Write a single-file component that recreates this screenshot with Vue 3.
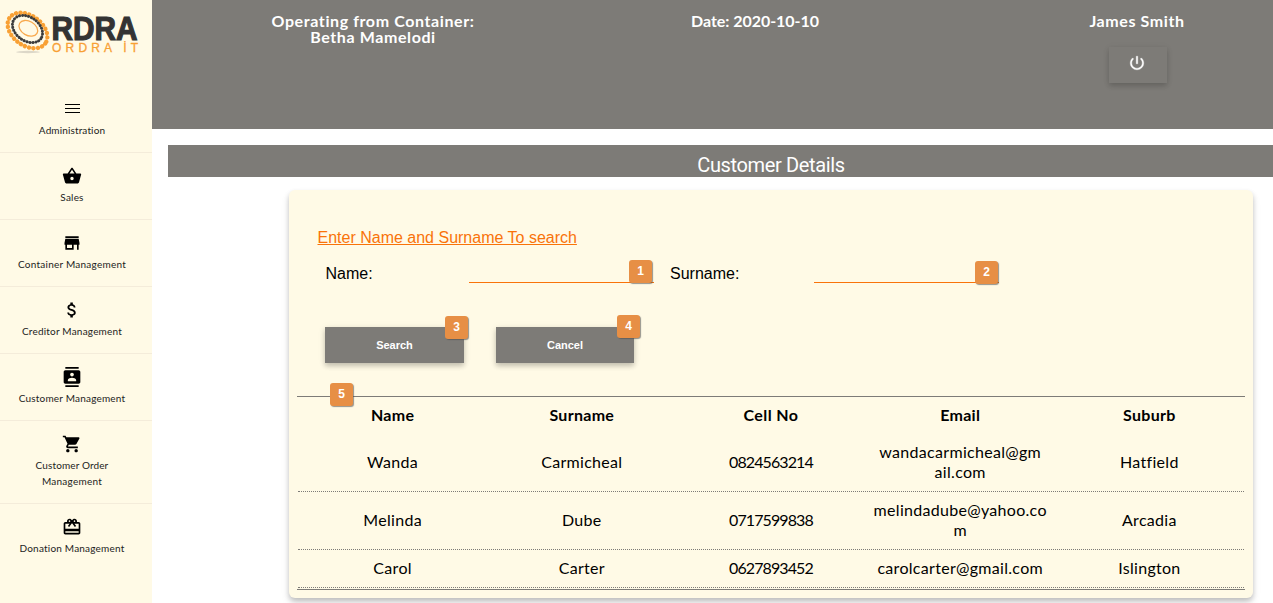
<script setup>
const menu = [
  { icon: 'menu', lines: [['Administration', 0.13]] },
  { icon: 'basket', lines: [['Sales', 0.2]] },
  { icon: 'store', lines: [['Container Management', 0.24]] },
  { icon: 'dollar', lines: [['Creditor Management', 0.2]] },
  { icon: 'contacts', lines: [['Customer Management', 0.2]] },
  { icon: 'cart', lines: [['Customer Order', 0.12], ['Management', 0.25]] },
  { icon: 'gift', lines: [['Donation Management', 0.2]] },
]
const icons = {
  menu: 'M3.6 6h18v1.2h-18zM3.6 10.8h18v1.2h-18zM3.6 15.6h18v1.2h-18z',
  basket: 'M17.21 9l-4.38-6.56c-.19-.28-.51-.42-.83-.42-.32 0-.64.14-.83.43L6.79 9H2c-.55 0-1 .45-1 1 0 .09.01.18.04.27l2.54 9.27c.23.84 1 1.46 1.92 1.46h13c.92 0 1.69-.62 1.93-1.46l2.54-9.27L23 10c0-.55-.45-1-1-1h-4.79zM9 9l3-4.4L15 9H9zm3 8c-1.1 0-2-.9-2-2s.9-2 2-2 2 .9 2 2-.9 2-2 2z',
  store: 'M20 4H4v2h16V4zm1 10v-2l-1-5H4l-1 5v2h1v6h10v-6h4v6h2v-6h1zm-9 4H6v-4h6v4z',
  dollar: 'M11.8 10.9c-2.27-.59-3-1.2-3-2.15 0-1.09 1.01-1.85 2.7-1.85 1.78 0 2.44.85 2.5 2.1h2.21c-.07-1.72-1.12-3.3-3.21-3.81V3h-3v2.16c-1.94.42-3.5 1.68-3.5 3.61 0 2.31 1.91 3.46 4.7 4.13 2.5.6 3 1.48 3 2.41 0 .69-.49 1.79-2.7 1.79-2.06 0-2.87-.92-2.98-2.1h-2.2c.12 2.19 1.76 3.42 3.68 3.83V21h3v-2.15c1.95-.37 3.5-1.5 3.5-3.55 0-2.84-2.43-3.81-4.7-4.4z',
  contacts: 'M20 0H4v2h16V0zM4 24h16v-2H4v2zM20 4H4c-1.1 0-2 .9-2 2v12c0 1.1.9 2 2 2h16c1.1 0 2-.9 2-2V6c0-1.1-.9-2-2-2zm-8 2.75c1.24 0 2.25 1.01 2.25 2.25s-1.01 2.25-2.25 2.25S9.75 10.24 9.75 9 10.76 6.75 12 6.75zM17 17H7v-1.5c0-1.67 3.33-2.5 5-2.5s5 .83 5 2.5V17z',
  cart: 'M7 18c-1.1 0-1.99.9-1.99 2S5.9 22 7 22s2-.9 2-2-.9-2-2-2zM1 2v2h2l3.6 7.59-1.35 2.45c-.16.28-.25.61-.25.96 0 1.1.9 2 2 2h12v-2H7.42c-.14 0-.25-.11-.25-.25l.03-.12.9-1.63h7.45c.75 0 1.41-.41 1.75-1.03l3.58-6.49c.08-.14.12-.31.12-.48 0-.55-.45-1-1-1H5.21l-.94-2H1zm16 16c-1.1 0-1.99.9-1.99 2s.89 2 1.99 2 2-.9 2-2-.9-2-2-2z',
  gift: 'M20 6h-2.18c.11-.31.18-.65.18-1 0-1.66-1.34-3-3-3-1.05 0-1.96.54-2.5 1.35l-.5.67-.5-.68C10.96 2.54 10.05 2 9 2 7.34 2 6 3.34 6 5c0 .35.07.69.18 1H4c-1.11 0-1.99.89-1.99 2L2 19c0 1.11.89 2 2 2h16c1.11 0 2-.89 2-2V8c0-1.11-.89-2-2-2zm-5-2c.55 0 1 .45 1 1s-.45 1-1 1-1-.45-1-1 .45-1 1-1zM9 4c.55 0 1 .45 1 1s-.45 1-1 1-1-.45-1-1 .45-1 1-1zm11 15H4v-2h16v2zm0-5H4V8h5.08L7 10.83 8.62 12 11 8.76l1-1.36 1 1.36L15.38 12 17 10.83 14.92 8H20v6z',
}
const columns = ['Name', 'Surname', 'Cell No', 'Email', 'Suburb']
const rows = [
  ['Wanda', 'Carmicheal', '0824563214', 'wandacarmicheal@gm\nail.com', 'Hatfield'],
  ['Melinda', 'Dube', '0717599838', 'melindadube@yahoo.co\nm', 'Arcadia'],
  ['Carol', 'Carter', '0627893452', 'carolcarter@gmail.com', 'Islington'],
]
</script>

<template>
  <div class="app">
    <aside class="sidebar">
      <svg class="logo" width="144" height="64" viewBox="0 0 144 64">
        <ellipse cx="28" cy="52" rx="12" ry="1.2" fill="#dcd7c8" />
        <g fill="none" stroke-linecap="round">
          <ellipse cx="27.5" cy="30.5" rx="22" ry="15" transform="rotate(36 27.5 30.5)" stroke="#f8a034" stroke-width="4.4" stroke-dasharray="0.1 4.3" />
          <ellipse cx="27.5" cy="29" rx="16.5" ry="11.8" transform="rotate(36 27.5 29)" stroke="#3d3d3d" stroke-width="3" stroke-dasharray="0.1 2.9" />
          <ellipse cx="28.3" cy="28.3" rx="10" ry="7" transform="rotate(30 28.3 28.3)" stroke="#f8a94e" stroke-width="1.3" />
        </g>
        <text x="51.5" y="40" textLength="86" lengthAdjust="spacingAndGlyphs" class="brand">RDRA</text>
        <text x="52" y="52" textLength="86" class="tagline">ORDRA İT</text>
      </svg>
      <nav>
        <a v-for="item in menu" :key="item.icon" class="item">
          <svg width="20" height="20" viewBox="0 0 24 24"><path :d="icons[item.icon]" /></svg>
          <span v-for="l in item.lines" :key="l[0]" class="label" :style="{ letterSpacing: l[1] + 'px' }">{{ l[0] }}</span>
        </a>
      </nav>
    </aside>

    <main class="main">
      <header class="header">
        <div class="cell"><span>Operating from Container:</span><span>Betha Mamelodi</span></div>
        <div class="cell"><span class="date">Date: 2020-10-10</span></div>
        <div class="cell">
          <span>James Smith</span>
          <button class="power">
            <svg width="18" height="18" viewBox="0 0 24 24"><path fill="#fff" stroke="#fff" stroke-width="0.5" d="M13 3h-2v10h2V3zm4.83 2.17l-1.42 1.42C17.99 7.86 19 9.81 19 12c0 3.87-3.13 7-7 7s-7-3.13-7-7c0-2.19 1.01-4.14 2.58-5.42L6.17 5.17C4.23 6.82 3 9.26 3 12c0 4.97 4.03 9 9 9s9-4.03 9-9c0-2.74-1.23-5.18-3.17-6.83z" /></svg>
          </button>
        </div>
      </header>

      <h1 class="title">Customer Details</h1>

      <section class="card">
        <div class="hint">Enter Name and Surname To search</div>
        <div class="fields">
          <label>Name:</label>
          <div class="input"><b class="badge b1">1</b></div>
          <label>Surname:</label>
          <div class="input"><b class="badge b2">2</b></div>
        </div>
        <div class="buttons">
          <button class="btn">Search<b class="badge b3">3</b></button>
          <button class="btn cancel">Cancel<b class="badge b4">4</b></button>
        </div>
        <div class="table">
          <b class="badge b5">5</b>
          <div class="row head"><div v-for="c in columns" :key="c">{{ c }}</div></div>
          <div v-for="(r, i) in rows" :key="i" class="row">
            <div v-for="v in r" :key="v">{{ v }}</div>
          </div>
        </div>
      </section>
    </main>
  </div>
</template>

<style>
body { margin: 0; overflow: hidden; background: #fff; }
</style>

<style scoped>
* { box-sizing: border-box; }
.app { display: flex; width: 1273px; height: 603px; overflow: hidden; font-family: Lato, sans-serif; }
.sidebar { width: 152px; flex: none; background: #fffae6; }
.logo { display: block; overflow: visible; }
.brand { font: bold 34px "Liberation Sans", sans-serif; fill: #333; stroke: #333; stroke-width: 1.2; }
.tagline { font: 12px "Liberation Sans", sans-serif; fill: #f8a034; stroke: #f8a034; stroke-width: 0.3; }
nav { padding-top: 22px; }
.item { display: flex; flex-direction: column; align-items: center; padding: 13px 8px 14px 0; border-bottom: 1px solid #f4ecda; color: #222; }
.item:last-child { border-bottom: 0; }
.item svg { display: block; margin-bottom: 3px; fill: #000; }
.label { font-size: 10px; line-height: 16px; white-space: nowrap; }
.main { flex: 1; min-width: 0; overflow: hidden; }
.header { display: grid; grid-template-columns: repeat(3, 382px); height: 129px; padding: 13px 0 0 30px; background: #7d7b77; overflow: hidden; }
.cell { display: flex; flex-direction: column; align-items: center; color: #fff; font-size: 16px; font-weight: bold; line-height: 16px; letter-spacing: 0.6px; }
.date { letter-spacing: -0.05px; }
.power { display: flex; justify-content: center; padding: 7px 1px 0 0; width: 58px; height: 36px; margin: 18px 0 0 1px; border: 0; background: #7d7b77; box-shadow: 0 3px 5px rgba(0,0,0,.16), 0 1px 8px rgba(0,0,0,.06); }
.title { width: 1206px; height: 32px; margin: 16px 0 0 16px; padding-top: 4px; background: #7d7b77; color: #fff; font: 400 20px/32px Roboto, sans-serif; letter-spacing: -0.36px; text-align: center; }
.card { width: 964px; height: 408px; margin: 13px 0 0 137px; padding: 38px 8px 0; background: #fffae6; border-radius: 6px; box-shadow: 0 3px 5px rgba(0,0,0,.18), 0 5px 9px rgba(0,0,0,.1); font-family: "Liberation Sans", Arial, sans-serif; font-size: 16px; }
.hint { margin-left: 20.5px; line-height: 20px; color: #f9730a; text-decoration: underline; }
.fields { display: grid; grid-template-columns: 143.5px 201px 144px 185px; height: 35px; margin-left: 28.5px; color: #000; }
.fields label { padding-top: 16px; line-height: 20px; }
.input { position: relative; width: 185px; height: 35px; border-bottom: 1px solid #f9730a; }
.badge { position: absolute; width: 23px; height: 23px; border-radius: 3px; background: #e78f45; box-shadow: 1px 1px 1px rgba(80,80,80,.6); color: #fff; font: bold 12px/23px "Liberation Sans", sans-serif; text-align: center; }
.b1 { right: 2px; top: 12px; }
.b2 { right: 1px; top: 13px; }
.b3 { right: -4px; top: -11px; }
.b4 { right: -6px; top: -12px; }
.b5 { left: 33px; top: -14px; }
.buttons { display: flex; gap: 32px; margin: 44px 0 0 28px; }
.btn { position: relative; width: 139px; height: 36px; padding: 0; border: 0; background: #7d7b77; color: #fff; font: bold 11px "Liberation Sans", sans-serif; box-shadow: 0 3px 5px rgba(0,0,0,.2), 0 1px 8px rgba(0,0,0,.08); }
.cancel { width: 138px; }
.table { position: relative; width: 948px; height: 194px; margin-top: 33px; padding: 1px; border-top: 1px solid #7d7b77; border-bottom: 1px solid #7d7b77; font-family: Lato, sans-serif; color: #000; }
.row { display: grid; grid-template-columns: repeat(5, 1fr); height: 58px; padding-bottom: 2px; align-items: center; text-align: center; border-bottom: 1px dotted #7d7b77; line-height: 20px; letter-spacing: 0.3px; white-space: pre-line; }
.row > :nth-child(3) { letter-spacing: -0.9px; }
.row:last-child { height: 38px; }
.head { height: 36px; border: 0; font-weight: bold; }
.head > :nth-child(3) { letter-spacing: 0.4px; }
</style>
